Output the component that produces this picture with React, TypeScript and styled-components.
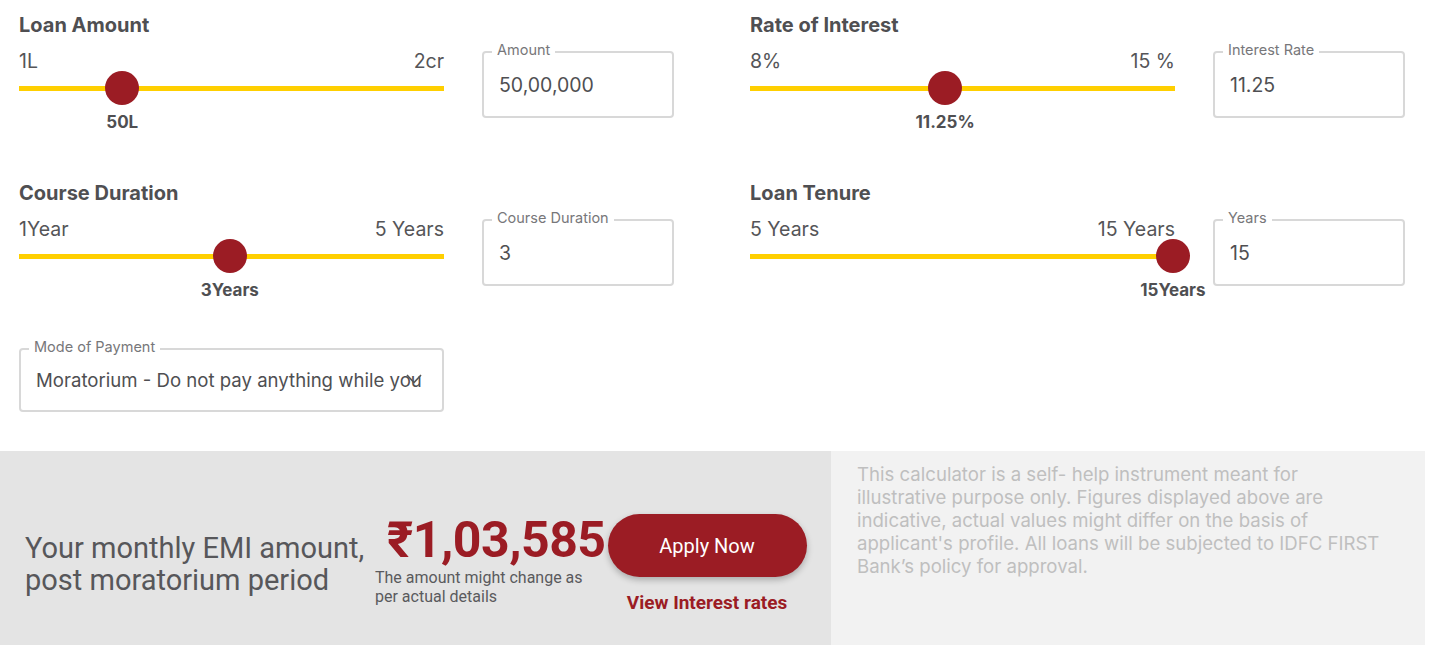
import styled, { createGlobalStyle } from "styled-components";

const GlobalStyle = createGlobalStyle`
  body {
    margin: 0;
    background: #ffffff;
    font-family: Roboto, "Liberation Sans", sans-serif;
  }
  * { box-sizing: border-box; }
`;

const Red = "#9b1c24";
const Yellow = "#ffcf00";
const TextDark = "#4f4f52";
const InterStack = `Inter, "Liberation Sans", sans-serif`;

type SliderField = {
  title: string;
  min: string;
  max: string;
  pct: number;
  value: string;
  label: string;
  input: string;
};

const fields: SliderField[] = [
  { title: "Loan Amount", min: "1L", max: "2cr", pct: 24.3, value: "50L", label: "Amount", input: "50,00,000" },
  { title: "Rate of Interest", min: "8%", max: "15 %", pct: 45.9, value: "11.25%", label: "Interest Rate", input: "11.25" },
  { title: "Course Duration", min: "1Year", max: "5 Years", pct: 49.6, value: "3Years", label: "Course Duration", input: "3" },
  { title: "Loan Tenure", min: "5 Years", max: "15 Years", pct: 99.5, value: "15Years", label: "Years", input: "15" },
];

const Slider = ({ f }: { f: SliderField }) => (
  <Field>
    <FieldTitle>{f.title}</FieldTitle>
    <FieldRow>
      <SliderArea>
        <RangeLabels>
          <span>{f.min}</span>
          <span>{f.max}</span>
        </RangeLabels>
        <TrackArea>
          <Track />
          <Thumb style={{ left: `${f.pct}%` }} />
          <ValueLabel style={{ left: `${f.pct}%` }}>{f.value}</ValueLabel>
        </TrackArea>
      </SliderArea>
      <OutlinedBox>
        <FloatLabel>{f.label}</FloatLabel>
        <BoxValue>{f.input}</BoxValue>
      </OutlinedBox>
    </FieldRow>
  </Field>
);

const App = () => {
  return (
    <Page>
      <GlobalStyle />
      <FormGrid>
        {fields.map((f) => (
          <Slider key={f.title} f={f} />
        ))}
        <SelectBox>
          <FloatLabel>Mode of Payment</FloatLabel>
          <SelectText>Moratorium - Do not pay anything while you study</SelectText>
          <Chevron viewBox="0 0 16 10" width={16} height={10}>
            <path d="M1 1 L8 8.5 L15 1" fill="none" stroke="#555" strokeWidth="1.6" />
          </Chevron>
        </SelectBox>
      </FormGrid>
      <ResultBand>
        <EmiPanel>
          <EmiText>
            Your monthly EMI amount,
            <br />
            post moratorium period
          </EmiText>
          <AmountBlock>
            <Amount>₹1,03,585</Amount>
            <AmountNote>
              The amount might change as
              <br />
              per actual details
            </AmountNote>
          </AmountBlock>
          <ActionBlock>
            <ApplyButton>Apply Now</ApplyButton>
            <RatesLink>View Interest rates</RatesLink>
          </ActionBlock>
        </EmiPanel>
        <Disclaimer>
          This calculator is a self- help instrument meant for illustrative purpose only. Figures displayed above
          are indicative, actual values might differ on the basis of applicant's profile. All loans will be
          subjected to IDFC FIRST Bank’s policy for approval.
        </Disclaimer>
      </ResultBand>
    </Page>
  );
};

export default App;

const Page = styled.div`
  width: 1425px;
`;

const FormGrid = styled.div`
  display: grid;
  grid-template-columns: 655px 655px;
  grid-template-rows: 168px 168px auto;
  column-gap: 76px;
  padding: 12px 0 39px 19px;
`;

const Field = styled.div`
  display: flex;
  flex-direction: column;
`;

const FieldTitle = styled.div`
  font-family: ${InterStack};
  font-size: 20px;
  line-height: 24px;
  font-weight: 700;
  color: ${TextDark};
  transform: translateY(1px);
`;

const FieldRow = styled.div`
  display: flex;
  gap: 38px;
  margin-top: 15px;
`;

const SliderArea = styled.div`
  width: 425px;
  display: flex;
  flex-direction: column;
`;

const RangeLabels = styled.div`
  display: flex;
  justify-content: space-between;
  font-family: ${InterStack};
  font-size: 19.5px;
  line-height: 20px;
  color: #555558;
`;

const TrackArea = styled.div`
  position: relative;
  height: 34px;
  display: flex;
  align-items: center;
`;

const Track = styled.div`
  width: 100%;
  height: 5px;
  background: ${Yellow};
`;

const Thumb = styled.div`
  position: absolute;
  top: 0;
  width: 34px;
  height: 34px;
  margin-left: -17px;
  border-radius: 50%;
  background: ${Red};
`;

const ValueLabel = styled.div`
  position: absolute;
  top: 41px;
  transform: translateX(-50%);
  font-family: ${InterStack};
  font-size: 17px;
  line-height: 20px;
  font-weight: 700;
  color: ${TextDark};
  white-space: nowrap;
`;

const OutlinedBox = styled.div`
  position: relative;
  width: 192px;
  height: 67px;
  border: 2px solid #d8d8d8;
  border-radius: 4px;
  display: flex;
  align-items: center;
  padding-left: 15px;
`;

const FloatLabel = styled.span`
  position: absolute;
  top: -12px;
  left: 8px;
  padding: 0 5px;
  background: #ffffff;
  font-family: ${InterStack};
  font-size: 14.5px;
  line-height: 18px;
  color: #77777a;
`;

const BoxValue = styled.span`
  font-family: ${InterStack};
  font-size: 19.5px;
  color: #4f4f52;
`;

const SelectBox = styled.div`
  position: relative;
  width: 425px;
  height: 64px;
  border: 2px solid #d8d8d8;
  border-radius: 4px;
  display: flex;
  align-items: center;
  padding: 0 19px 0 15px;
`;

const SelectText = styled.span`
  font-family: ${InterStack};
  font-size: 18.6px;
  color: #4f4f52;
  white-space: nowrap;
  overflow: hidden;
`;

const Chevron = styled.svg`
  position: absolute;
  right: 20px;
  top: 24px;
`;

const ResultBand = styled.div`
  display: grid;
  grid-template-columns: 831px 594px;
  height: 195px;
`;

const EmiPanel = styled.div`
  background: #e4e4e4;
  display: flex;
  align-items: flex-start;
  padding: 63px 0 0 25px;
`;

const EmiText = styled.div`
  margin-top: 18px;
  width: 350px;
  font-size: 29px;
  line-height: 32px;
  color: #57575a;
`;

const AmountBlock = styled.div`
  display: flex;
  flex-direction: column;
`;

const Amount = styled.div`
  margin-left: 12px;
  font-size: 50px;
  line-height: 52px;
  font-weight: 700;
  color: ${Red};
  letter-spacing: -0.5px;
`;

const AmountNote = styled.div`
  margin-top: 2px;
  font-size: 16px;
  line-height: 19px;
  color: #5a5a5d;
`;

const ActionBlock = styled.div`
  margin-left: 2px;
  display: flex;
  flex-direction: column;
  align-items: center;
`;

const ApplyButton = styled.button`
  width: 199px;
  height: 63px;
  border: none;
  border-radius: 32px;
  background: ${Red};
  color: #ffffff;
  font-family: Roboto, "Liberation Sans", sans-serif;
  font-size: 20px;
  box-shadow: 0 3px 6px rgba(0, 0, 0, 0.25);
  cursor: pointer;
`;

const RatesLink = styled.a`
  margin-top: 15px;
  font-size: 19px;
  line-height: 22px;
  font-weight: 700;
  color: ${Red};
`;

const Disclaimer = styled.div`
  background: #f2f2f2;
  padding: 12px 40px 0 26px;
  font-family: ${InterStack};
  font-size: 18.6px;
  line-height: 23px;
  color: #bfbfbf;
`;
